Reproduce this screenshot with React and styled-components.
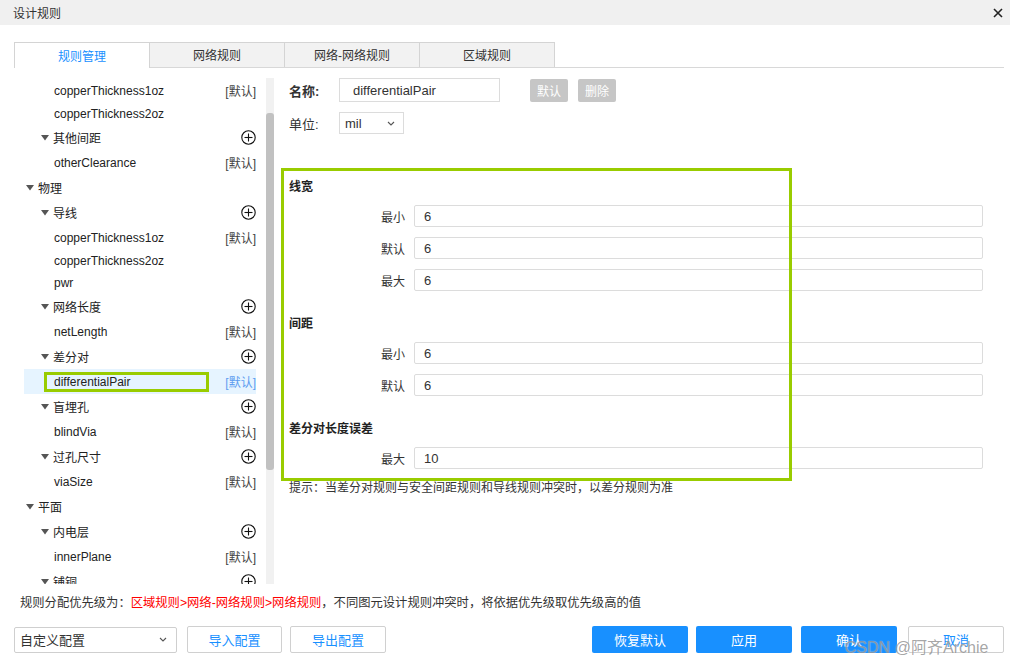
import React from "react";
import styled, { createGlobalStyle } from "styled-components";

const GlobalStyle = createGlobalStyle`
  body {
    margin: 0;
    background: #fff;
    font-family: "Liberation Sans", "Noto Sans CJK SC", sans-serif;
    color: #333;
  }
`;

const Dialog = styled.div`
  position: relative;
  width: 1010px;
  height: 666px;
  background: #fff;
  display: flex;
  flex-direction: column;
  overflow: hidden;
`;

const TitleBar = styled.div`
  height: 25px;
  background: #f0f0f0;
  display: flex;
  align-items: center;
  justify-content: space-between;
  padding: 0 7px 0 13px;
  font-size: 12px;
  color: #333;
`;

const CloseBtn = styled.span`
  display: flex;
  align-items: center;
`;

const TabBar = styled.div`
  display: flex;
  margin: 17px 6px 0 14px;
  border-bottom: 1px solid #d8d8d8;
`;

const Tab = styled.div`
  box-sizing: border-box;
  width: 136px;
  height: ${(p) => (p.$active ? "26px" : "25px")};
  margin-bottom: ${(p) => (p.$active ? "-1px" : "0")};
  margin-left: ${(p) => (p.$first ? "0" : "-1px")};
  border: 1px solid #d4d4d4;
  border-bottom: none;
  background: ${(p) => (p.$active ? "#fff" : "#f2f2f2")};
  color: ${(p) => (p.$active ? "#1890ff" : "#333")};
  font-size: 12px;
  display: flex;
  align-items: center;
  justify-content: center;
  padding-bottom: 1px;
`;

const Body = styled.div`
  display: flex;
  margin: 10px 0 0 14px;
  height: 506px;
`;

const TreePanel = styled.div`
  width: 232px;
  padding: 0 10px;
  overflow: hidden;
`;

const TreeRow = styled.div`
  position: relative;
  height: ${(p) => (p.$short ? "22px" : "25px")};
  display: flex;
  align-items: center;
  padding-left: ${(p) => (p.$level === 0 ? 2 : p.$level === 1 ? 17 : 30)}px;
  background: ${(p) => (p.$selected ? "#e6f4ff" : "transparent")};
  font-size: 12px;
  color: #222;
`;

const Caret = styled.svg`
  width: 8px;
  height: 6px;
  margin-right: 4px;
  flex: none;
`;

const RowLabel = styled.span`
  flex: 1;
`;

const Badge = styled.span`
  font-size: 12px;
  color: ${(p) => (p.$selected ? "#5d9cf0" : "#444")};
`;

const Mark = styled.div`
  position: absolute;
  left: 20px;
  top: 3px;
  width: 165px;
  height: 20px;
  box-sizing: border-box;
  border: 3px solid #99cc00;
`;

const ScrollTrack = styled.div`
  width: 8px;
  background: #f1f1f1;
  display: flex;
  flex-direction: column;
`;

const ScrollThumb = styled.div`
  margin-top: 35px;
  height: 357px;
  background: #c1c1c1;
  border-radius: 3px;
`;

const FormPane = styled.div`
  position: relative;
  flex: 1;
  padding: 0 27px 0 15px;
  display: flex;
  flex-direction: column;
`;

const TopRow = styled.div`
  display: flex;
  align-items: center;
  height: ${(p) => p.$h}px;
  margin-top: ${(p) => p.$mt || 0}px;
`;

const TopLabel = styled.span`
  width: 50px;
  font-size: 13px;
  font-weight: ${(p) => (p.$bold ? 700 : 400)};
  color: #333;
`;

const NameInput = styled.input`
  box-sizing: border-box;
  width: 161px;
  height: 24px;
  border: 1px solid #dcdcdc;
  padding: 0 0 0 13px;
  font: inherit;
  font-size: 13px;
  color: #333;
  outline: none;
`;

const GrayBtn = styled.button`
  box-sizing: border-box;
  width: 38px;
  height: 23px;
  margin-left: ${(p) => p.$ml}px;
  border: none;
  border-radius: 2px;
  background: #c6c6c6;
  color: #fff;
  font: inherit;
  font-size: 12px;
  padding: 0;
`;

const UnitSelect = styled.div`
  box-sizing: border-box;
  width: 65px;
  height: 22px;
  border: 1px solid #dcdcdc;
  display: flex;
  align-items: center;
  justify-content: space-between;
  padding: 0 8px 0 5px;
  font-size: 13px;
  color: #333;
`;

const Section = styled.div`
  margin-top: ${(p) => p.$mt}px;
  display: flex;
  flex-direction: column;
  gap: 10px;
`;

const SectionTitle = styled.div`
  height: 20px;
  line-height: 20px;
  font-size: 12px;
  font-weight: 700;
  color: #222;
  margin-bottom: -2px;
`;

const FieldRow = styled.div`
  display: flex;
  align-items: center;
  height: 22px;
`;

const FieldLabel = styled.span`
  width: 116px;
  padding-right: 9px;
  text-align: right;
  font-size: 12px;
  color: #333;
`;

const FieldInput = styled.input`
  flex: 1;
  box-sizing: border-box;
  height: 22px;
  border: 1px solid #dcdcdc;
  border-radius: 2px;
  padding: 0 0 0 9px;
  font: inherit;
  font-size: 13px;
  color: #333;
  outline: none;
`;

const Tip = styled.div`
  margin-top: 11px;
  line-height: 16px;
  font-size: 12px;
  color: #333;
`;

const GreenBox = styled.div`
  position: absolute;
  left: 7px;
  top: 90px;
  width: 511px;
  height: 313px;
  box-sizing: border-box;
  border: 3px solid #99cc00;
  pointer-events: none;
`;

const Priority = styled.div`
  margin-top: 10px;
  padding-left: 20px;
  line-height: 18px;
  font-size: 12.3px;
  color: #333;
`;

const Red = styled.span`
  color: #ff0000;
`;

const Footer = styled.div`
  display: flex;
  align-items: center;
  margin-top: 14px;
  padding: 0 6px 0 14px;
`;

const ConfigSelect = styled.div`
  box-sizing: border-box;
  width: 163px;
  height: 26px;
  border: 1px solid #cfcfcf;
  border-radius: 2px;
  display: flex;
  align-items: center;
  justify-content: space-between;
  padding: 0 9px 0 5px;
  font-size: 13px;
  color: #333;
`;

const OutlineBtn = styled.button`
  box-sizing: border-box;
  width: ${(p) => p.$w || 95}px;
  height: 27px;
  margin-left: ${(p) => p.$ml}px;
  border: 1px solid #d0d0d0;
  border-radius: 2px;
  background: #fff;
  color: #1890ff;
  font: inherit;
  font-size: 13px;
  padding: 0;
`;

const PrimaryBtn = styled.button`
  box-sizing: border-box;
  width: 96px;
  height: 27px;
  margin-left: ${(p) => p.$ml}px;
  border: none;
  border-radius: 2px;
  background: #1890ff;
  color: #fff;
  font: inherit;
  font-size: 13px;
  padding: 0;
`;

const Spacer = styled.div`
  flex: 1;
`;

const Watermark = styled.div`
  position: absolute;
  left: 845px;
  top: 638px;
  font-size: 16px;
  line-height: 20px;
  color: rgba(90, 90, 90, 0.55);
  text-shadow: 0 0 1px rgba(255, 255, 255, 0.8);
  white-space: nowrap;
  pointer-events: none;
`;

const Chevron = () => (
  <svg width="8" height="5" viewBox="0 0 8 5">
    <polyline points="1,1 4,4 7,1" fill="none" stroke="#555" strokeWidth="1.1" />
  </svg>
);

const PlusIcon = () => (
  <svg width="15" height="15" viewBox="0 0 15 15">
    <circle cx="7.5" cy="7.5" r="6.7" fill="none" stroke="#111" strokeWidth="1.1" />
    <line x1="3.5" y1="7.5" x2="11.5" y2="7.5" stroke="#111" strokeWidth="1.1" />
    <line x1="7.5" y1="3.5" x2="7.5" y2="11.5" stroke="#111" strokeWidth="1.1" />
  </svg>
);

const tree = [
  { level: 2, text: "copperThickness1oz", badge: true },
  { level: 2, text: "copperThickness2oz", short: true },
  { level: 1, text: "其他间距", plus: true },
  { level: 2, text: "otherClearance", badge: true },
  { level: 0, text: "物理" },
  { level: 1, text: "导线", plus: true },
  { level: 2, text: "copperThickness1oz", badge: true },
  { level: 2, text: "copperThickness2oz", short: true },
  { level: 2, text: "pwr", short: true },
  { level: 1, text: "网络长度", plus: true },
  { level: 2, text: "netLength", badge: true },
  { level: 1, text: "差分对", plus: true },
  { level: 2, text: "differentialPair", badge: true, selected: true },
  { level: 1, text: "盲埋孔", plus: true },
  { level: 2, text: "blindVia", badge: true },
  { level: 1, text: "过孔尺寸", plus: true },
  { level: 2, text: "viaSize", badge: true },
  { level: 0, text: "平面" },
  { level: 1, text: "内电层", plus: true },
  { level: 2, text: "innerPlane", badge: true },
  { level: 1, text: "铺铜", plus: true },
];

const sections = [
  { title: "线宽", mt: 43, fields: [["最小", "6"], ["默认", "6"], ["最大", "6"]] },
  { title: "间距", mt: 23, fields: [["最小", "6"], ["默认", "6"]] },
  { title: "差分对长度误差", mt: 23, fields: [["最大", "10"]] },
];

const tabs = ["规则管理", "网络规则", "网络-网络规则", "区域规则"];

export default function App() {
  return (
    <>
      <GlobalStyle />
      <Dialog>
        <TitleBar>
          <span>设计规则</span>
          <CloseBtn>
            <svg width="10" height="10" viewBox="0 0 10 10">
              <path d="M1 1 L9 9 M9 1 L1 9" stroke="#222" strokeWidth="1.6" />
            </svg>
          </CloseBtn>
        </TitleBar>

        <TabBar>
          {tabs.map((t, i) => (
            <Tab key={t} $active={i === 0} $first={i === 0}>
              {t}
            </Tab>
          ))}
        </TabBar>

        <Body>
          <TreePanel>
            {tree.map((r, i) => (
              <TreeRow key={i} $level={r.level} $short={r.short} $selected={r.selected}>
                {r.level < 2 && (
                  <Caret viewBox="0 0 8 6">
                    <polygon points="0,0 8,0 4,5.5" fill="#555" />
                  </Caret>
                )}
                <RowLabel>{r.text}</RowLabel>
                {r.badge && <Badge $selected={r.selected}>[默认]</Badge>}
                {r.plus && <PlusIcon />}
                {r.selected && <Mark />}
              </TreeRow>
            ))}
          </TreePanel>
          <ScrollTrack>
            <ScrollThumb />
          </ScrollTrack>

          <FormPane>
            <TopRow $h={24}>
              <TopLabel $bold>名称:</TopLabel>
              <NameInput defaultValue="differentialPair" readOnly />
              <GrayBtn $ml={30}>默认</GrayBtn>
              <GrayBtn $ml={10}>删除</GrayBtn>
            </TopRow>
            <TopRow $h={22} $mt={10}>
              <TopLabel>单位:</TopLabel>
              <UnitSelect>
                <span>mil</span>
                <Chevron />
              </UnitSelect>
            </TopRow>

            {sections.map((s) => (
              <Section key={s.title} $mt={s.mt}>
                <SectionTitle>{s.title}</SectionTitle>
                {s.fields.map(([label, value]) => (
                  <FieldRow key={label}>
                    <FieldLabel>{label}</FieldLabel>
                    <FieldInput defaultValue={value} readOnly />
                  </FieldRow>
                ))}
              </Section>
            ))}

            <Tip>提示：当差分对规则与安全间距规则和导线规则冲突时，以差分规则为准</Tip>
            <GreenBox />
          </FormPane>
        </Body>

        <Priority>
          规则分配优先级为：<Red>区域规则&gt;网络-网络规则&gt;网络规则</Red>
          ，不同图元设计规则冲突时，将依据优先级取优先级高的值
        </Priority>

        <Footer>
          <ConfigSelect>
            <span>自定义配置</span>
            <Chevron />
          </ConfigSelect>
          <OutlineBtn $ml={10}>导入配置</OutlineBtn>
          <OutlineBtn $ml={8} $w={96}>导出配置</OutlineBtn>
          <Spacer />
          <PrimaryBtn $ml={0}>恢复默认</PrimaryBtn>
          <PrimaryBtn $ml={8}>应用</PrimaryBtn>
          <PrimaryBtn $ml={9}>确认</PrimaryBtn>
          <OutlineBtn $ml={11} $w={96}>取消</OutlineBtn>
        </Footer>

        <Watermark>CSDN @阿齐Archie</Watermark>
      </Dialog>
    </>
  );
}
